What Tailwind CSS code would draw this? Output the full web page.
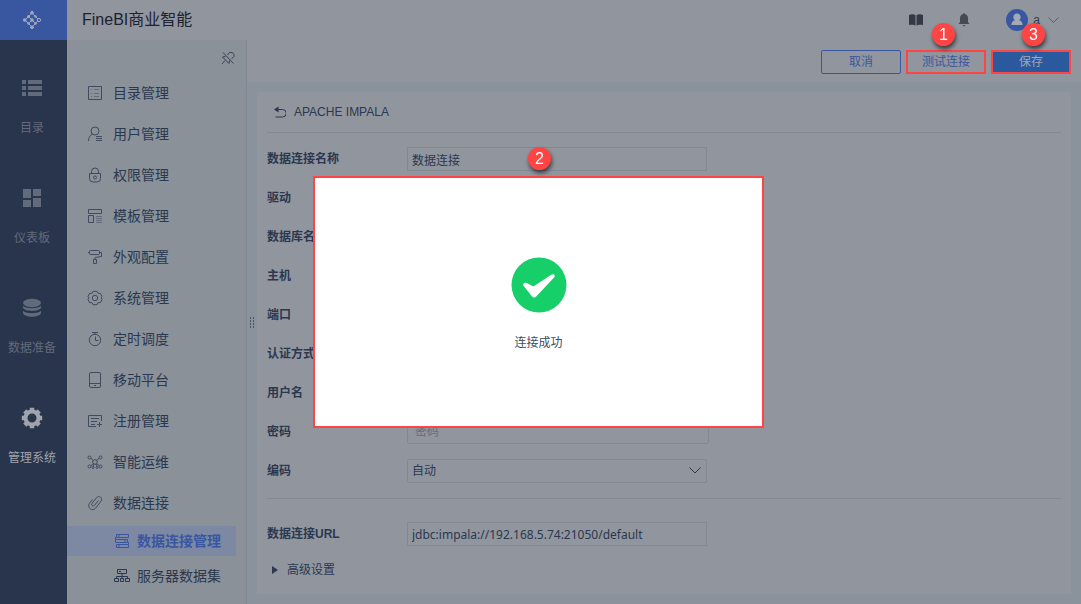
<!DOCTYPE html>
<html lang="zh-CN">
<head>
    <meta charset="UTF-8">
    <meta name="viewport" content="width=device-width, initial-scale=1.0">
    <title>FineBI商业智能</title>
    <script src="https://cdn.jsdelivr.net/npm/@tailwindcss/browser@4"></script>
</head>
<body class="flex min-h-screen flex-col bg-[#8a929c] font-['Liberation_Sans','Noto_Sans_CJK_SC',sans-serif] text-xs text-[#2b384f]">

    <!-- Top bar -->
    <header class="flex h-10 bg-[#91959e]">
        <a href="#" aria-label="FineBI" class="flex w-[67px] items-center justify-center bg-[#3957a1] pr-1 text-[#a3abbf]">
            <svg class="size-5" viewBox="0 0 20 20" fill="none" stroke="currentColor">
                <path d="M10 3 3 10l7 7 7-7zM7 13l3-3 3 3M6.500 6.500L10 10" />
                <g fill="currentColor" stroke="none">
                    <circle cx="10" cy="2.700" r="1.800" /><circle cx="2.700" cy="10" r="1.800" />
                    <circle cx="10" cy="17.300" r="1.800" /><circle cx="6.500" cy="6.500" r="1.500" />
                    <circle cx="10" cy="10" r="1.700" /><circle cx="6.500" cy="13.500" r="1.200" />
                    <circle cx="13.500" cy="13.500" r="1.300" /><circle cx="13.500" cy="6.500" r="1.200" />
                </g>
                <circle cx="17" cy="10" r="1.600" fill="#3957a1" />
            </svg>
        </a>
        <h1 class="flex-1 pl-[15px] text-base leading-10 text-[#1b2230]">FineBI商业智能</h1>
        <div class="flex items-center pr-[22px] text-[#343a45]">
            <svg class="mr-[35px] h-3 w-[14px]" viewBox="0 0 14 12" fill="currentColor"><path d="M0 1C2 0 5 0 6.500 1.200V11.500C5 10.500 2 10.500 0 11zM14 1C12 0 9 0 7.500 1.200V11.500C9 10.500 12 10.500 14 11z" /></svg>
            <svg class="mr-9 h-[14px] w-3" viewBox="0 0 12 14" fill="#454a55"><path d="M6 1c2.500 0 4 2 4 4v4l1.500 2H.5L2 9V5c0-2 1.500-4 4-4zM4.500 12h3L6 13.500z" /><circle cx="6" cy="1.300" r="1" /></svg>
            <svg class="mr-[5px] size-[22px]" viewBox="0 0 22 22"><circle cx="11" cy="11" r="11" fill="#3957a1" /><path d="M11 4.500a3.600 3.600 0 0 1 3.600 3.800c0 1.300-.7 2.300-1.600 3 2.200.6 3.600 2 3.600 4.700H5.400c0-2.700 1.400-4.100 3.600-4.700-.9-.7-1.600-1.700-1.600-3A3.600 3.600 0 0 1 11 4.500z" fill="#a3a9b5" /></svg>
            <span class="mr-2">a</span>
            <svg class="h-[6px] w-[11px]" viewBox="0 0 11 6" fill="none" stroke="#59606b"><path d="M.5.5l5 5 5-5" /></svg>
        </div>
    </header>

    <div class="flex flex-1">
        <!-- Primary navigation -->
        <nav class="w-[67px] shrink-0 bg-[#29344d] pr-[3px] text-[#626b7b]">
            <a href="#" class="flex h-[110px] flex-col items-center pt-9">
                <svg class="size-6" viewBox="0 0 24 24" fill="currentColor"><path d="M2 4h4v4H2zM8 4h14v4H8zM2 10h4v4H2zM8 10h14v4H8zM2 16h4v4H2zM8 16h14v4H8z" /></svg>
                <span class="mt-4 leading-6">目录</span>
            </a>
            <a href="#" class="flex h-[110px] flex-col items-center pt-9">
                <svg class="size-6" viewBox="0 0 24 24" fill="currentColor"><path d="M3 3h8v9H3zM3 14h8v7H3zM13 3h8v7h-8zM13 12h8v9h-8z" /></svg>
                <span class="mt-4 leading-6">仪表板</span>
            </a>
            <a href="#" class="flex h-[110px] flex-col items-center pt-9">
                <svg class="size-6" viewBox="0 0 24 24" fill="currentColor"><ellipse cx="12" cy="7" rx="9" ry="4.200" /><path d="M3 9.500c1.500 3.500 16.500 3.500 18 0v2c-1 4.500-17 4.500-18 0zM3 14.500c1.500 3.500 16.500 3.500 18 0v2.500c-1 5-17 5-18 0z" /></svg>
                <span class="mt-4 leading-6">数据准备</span>
            </a>
            <a href="#" aria-current="page" class="flex h-[110px] flex-col items-center pt-9 text-[#a0a4ac]">
                <svg class="size-6" viewBox="0 0 24 24" fill="none" stroke="currentColor"><circle cx="12" cy="12" r="6.500" stroke-width="4" /><path d="M12 1.800v3M12 19.200v3M1.800 12h3M19.200 12h3M4.800 4.800l2 2M17.200 17.200l2 2M4.800 19.200l2-2M17.200 6.800l2-2" stroke-width="4.500" /></svg>
                <span class="mt-4 leading-6">管理系统</span>
            </a>
        </nav>

        <!-- Management menu -->
        <aside class="w-[180px] shrink-0 border-r border-[#7f8792] bg-[#8a9199] text-sm">
            <div class="flex h-8 justify-end pt-[11px] pr-[11px]">
                <button type="button" aria-label="取消固定" class="size-[14px] text-[#3a4456]">
                    <svg class="size-[14px]" viewBox="0 0 14 14" fill="none" stroke="currentColor"><path d="M2 1.500l10.500 11M6.500 4l2-2.500h3l1.500 2v2L10.500 8M4.500 5.500l-3 .5 6.500 6.500.5-3M4 9.500L1 13" /></svg>
                </button>
            </div>
            <a href="#" class="flex h-[41px] items-center gap-[10px] pl-5">
                <svg class="size-4" viewBox="0 0 16 16" fill="none" stroke="#414b5f"><path d="M1.500 1.500h13v13h-13z" /><path d="M4 4.500h1M7 4.500h5M4 8.500h1M7 8.500h5M4 11.500h1M7 11.500h5" stroke="#636b7a" /></svg>
                目录管理
            </a>
            <a href="#" class="flex h-[41px] items-center gap-[10px] pl-5">
                <svg class="size-4" viewBox="0 0 16 16" fill="none" stroke="#414b5f"><circle cx="8" cy="5" r="4" /><path d="M5.500 8C3 9.500 1.500 11.500 1.500 15M9 10.500h6M9 12.500h6M9 14.500h6" /></svg>
                用户管理
            </a>
            <a href="#" class="flex h-[41px] items-center gap-[10px] pl-5">
                <svg class="size-4" viewBox="0 0 16 16" fill="none" stroke="#414b5f"><path d="M2.500 6.500h11v5q0 3.500-3.500 3.500H6q-3.500 0-3.500-3.500zM4.500 6V4.500a3.500 3.500 0 0 1 7 0V6" /><circle cx="8" cy="10.500" r="1.500" /></svg>
                权限管理
            </a>
            <a href="#" class="flex h-[41px] items-center gap-[10px] pl-5">
                <svg class="size-4" viewBox="0 0 16 16" fill="none" stroke="#414b5f"><path d="M1.500 1.500h13v4h-13zM1.500 7.500h5v7h-5z" /><path d="M9 8.500h6M9 10.500h6M9 12.500h6M9 14.500h6" stroke="#636b7a" /></svg>
                模板管理
            </a>
            <a href="#" class="flex h-[41px] items-center gap-[10px] pl-5">
                <svg class="size-4" viewBox="0 0 16 16" fill="none" stroke="#414b5f"><path d="M3.500 1.500h8q1 0 1 1v2q0 1-1 1h-8q-1 0-1-1v-2q0-1 1-1zM1 3.500h1.500M12.500 3.500h2v4l-6.500 1v1.500M6.500 10.500h3v4h-3z" /></svg>
                外观配置
            </a>
            <a href="#" class="flex h-[41px] items-center gap-[10px] pl-5">
                <svg class="size-4" viewBox="0 0 16 16" fill="none" stroke="#414b5f"><circle cx="8" cy="8" r="2.700" /><path d="M6 1.300h4l1 2 2.500.2 1.500 3L14 8l1 1.500-1.500 3-2.500.2-1 2H6l-1-2-2.500-.2-1.500-3L2 8 1 6.500l1.500-3L5 3.300z" stroke-linejoin="round" /></svg>
                系统管理
            </a>
            <a href="#" class="flex h-[41px] items-center gap-[10px] pl-5">
                <svg class="size-4" viewBox="0 0 16 16" fill="none" stroke="#414b5f"><circle cx="8" cy="9" r="5.700" /><path d="M5 1.500h6M8 1.500v2M8.500 5.500v4h3" /></svg>
                定时调度
            </a>
            <a href="#" class="flex h-[41px] items-center gap-[10px] pl-5">
                <svg class="size-4" viewBox="0 0 16 16" fill="none" stroke="#414b5f"><rect x="2.500" y=".5" width="11" height="15" rx="1.500" /><path d="M3 11.500h10M7 13.500h2" /></svg>
                移动平台
            </a>
            <a href="#" class="flex h-[41px] items-center gap-[10px] pl-5">
                <svg class="size-4" viewBox="0 0 16 16" fill="none" stroke="#414b5f"><path d="M14.500 8V2.500h-13v11H9M4 5.500h8M4 8.500h6M4 11.500h4M12.500 9v5M10 11.500h5" /></svg>
                注册管理
            </a>
            <a href="#" class="flex h-[41px] items-center gap-[10px] pl-5">
                <svg class="size-4" viewBox="0 0 16 16" fill="none" stroke="#414b5f"><circle cx="2.500" cy="3.500" r="1.500" /><circle cx="13.500" cy="3.500" r="1.500" /><circle cx="2.500" cy="12.500" r="1.500" /><circle cx="13.500" cy="12.500" r="1.500" /><circle cx="6" cy="13.500" r="1" /><circle cx="10" cy="13.500" r="1" /><circle cx="8" cy="8" r="2.300" /><path d="M4 4.500l2.500 2M12 4.500l-2.500 2M4 11.500l2.500-2M12 11.500l-2.500-2M7 10l-1 2.500M9 10l1 2.500" /></svg>
                智能运维
            </a>
            <a href="#" class="flex h-[41px] items-center gap-[10px] pl-5">
                <svg class="size-4" viewBox="0 0 16 16" fill="none" stroke="#414b5f"><path d="M11.500 5.500l-4 4.800c-1.500 1.700-3.800 0-2.500-1.900l4.500-5.700c2.500-2.700 6.500-.2 4.600 3.300l-5.300 7c-3.500 3.700-9 .2-6.500-4.500L5.500 4.500" /></svg>
                数据连接
            </a>
            <a href="#" aria-current="page" class="mt-[3px] mr-[10px] flex h-[30px] items-center gap-[7px] bg-[#7d89a3] pl-[47px] font-bold text-[#3957a1]">
                <svg class="size-4" viewBox="0 0 16 16" fill="none" stroke="currentColor"><path d="M2.500 1.500h12v3h-12zM1.500 6.500h12v3h-12zM2.500 11.500h12v3h-12zM4 3h2M10 8h2M4 13h2M1.500 4v2.500M14.500 9v2.500" /></svg>
                数据连接管理
            </a>
            <a href="#" class="mt-[5px] flex h-[30px] items-center gap-[7px] pl-[47px]">
                <svg class="size-4" viewBox="0 0 16 16" fill="none" stroke="currentColor"><path d="M3.500 1.500h9v4h-9zM5 3.500h2M8 5.500v5M2.500 10.500v-2h11v2M.5 10.500h4v3h-4zM6.500 10.500h3v3h-3zM11.500 10.500h4v3h-4z" /></svg>
                服务器数据集
            </a>
        </aside>

        <main class="flex min-w-0 flex-1 flex-col">
            <!-- Actions -->
            <div class="flex h-[42px] items-center justify-end gap-[5px] bg-[#91959e] pr-[10px] pt-[2px]">
                <button type="button" class="h-6 w-20 rounded-xs border border-[#3957a1] text-[#3957a1]">取消</button>
                <button type="button" class="relative h-6 w-20 border border-[#3957a1] text-[#3957a1] outline-2 -outline-offset-2 outline-[#ff4444]">
                    测试连接
                    <span class="absolute -top-7 left-[25px] z-20 size-[23px] rounded-full bg-[#ff4444] text-base leading-[23px] text-white shadow-[1px_3px_4px_#0009]">1</span>
                </button>
                <button type="button" class="relative h-6 w-20 border border-[#2b599e] bg-[#2b599e] text-[#a0a7b5] outline-2 -outline-offset-2 outline-[#ff4444]">
                    保存
                    <span class="absolute -top-7 left-[30px] z-20 size-[23px] rounded-full bg-[#ff4444] text-base leading-[23px] text-white shadow-[1px_3px_4px_#0009]">3</span>
                </button>
            </div>

            <div class="flex flex-1">
                <!-- Splitter handle -->
                <div class="flex w-[10px] items-center justify-center">
                    <svg class="mb-10 h-3 w-[5px]" viewBox="0 0 5 12" fill="#4a5363"><path d="M0 0h1v2H0zM3 0h1v2H3zM0 3h1v2H0zM3 3h1v2H3zM0 6h1v2H0zM3 6h1v2H3zM0 9h1v2H0zM3 9h1v2H3z" /></svg>
                </div>

                <form class="my-[10px] mr-[10px] min-w-0 flex-1 bg-[#91959e] px-[10px]">
                    <div class="flex h-[41px] items-center gap-2 border-b border-[#828995] pl-[7px]">
                        <button type="button" aria-label="返回" class="h-3 w-3">
                            <svg class="h-3 w-3" viewBox="0 0 12 12" fill="none" stroke="currentColor"><path d="M1 3.500h7.500a3.700 3.700 0 0 1 0 7.500H1.500" /><path d="M0 3.500L4.500.5v6z" fill="currentColor" stroke="none" /></svg>
                        </button>
                        <h2>APACHE IMPALA</h2>
                    </div>

                    <div class="grid grid-cols-[140px_1fr] items-center gap-y-[15px] pt-[14px] pb-[15px]">
                        <label for="name" class="font-bold">数据连接名称</label>
                        <div class="relative w-[300px]">
                            <input id="name" type="text" value="数据连接" class="block h-6 w-full border border-[#828995] px-1">
                            <span class="absolute top-0 left-[121px] z-20 size-[23px] rounded-full bg-[#ff4444] text-center text-base leading-[23px] text-white shadow-[1px_3px_4px_#0009]">2</span>
                        </div>
                        <label for="driver" class="font-bold">驱动</label>
                        <input id="driver" type="text" class="h-6 w-[300px] border border-[#828995] px-1">
                        <label for="database" class="font-bold">数据库名称</label>
                        <input id="database" type="text" class="h-6 w-[300px] border border-[#828995] px-1">
                        <label for="host" class="font-bold">主机</label>
                        <input id="host" type="text" class="h-6 w-[300px] border border-[#828995] px-1">
                        <label for="port" class="font-bold">端口</label>
                        <input id="port" type="text" class="h-6 w-[300px] border border-[#828995] px-1">
                        <label for="auth" class="font-bold">认证方式</label>
                        <input id="auth" type="text" class="h-6 w-[300px] border border-[#828995] px-1">
                        <label for="user" class="font-bold">用户名</label>
                        <input id="user" type="text" class="h-6 w-[300px] border border-[#828995] px-1">
                        <label for="password" class="font-bold">密码</label>
                        <input id="password" type="password" placeholder="密码" class="h-6 w-[302px] rounded-xs border border-[#828995] px-[7px] placeholder:text-[#666e7b]">
                        <label for="encoding" class="font-bold">编码</label>
                        <div class="relative w-[300px]">
                            <select id="encoding" class="block h-6 w-full appearance-none rounded-xs border border-[#828995] px-1">
                                <option>自动</option>
                            </select>
                            <svg class="pointer-events-none absolute top-2 right-[6px] h-[7px] w-3" viewBox="0 0 12 7" fill="none" stroke="currentColor"><path d="M.5.5l5.500 5.500L11.500.5" /></svg>
                        </div>
                    </div>

                    <div class="grid grid-cols-[140px_1fr] items-center border-t border-[#828995] pt-[23px]">
                        <label for="url" class="font-bold">数据连接URL</label>
                        <input id="url" type="text" value="jdbc:impala://192.168.5.74:21050/default" class="h-6 w-[300px] border border-[#828995] px-1 font-['Noto_Sans'] text-xs">
                    </div>
                    <button type="button" class="mt-[14px] mb-3 flex items-center gap-2 pl-[5px] leading-5">
                        <svg class="h-2 w-[7px]" viewBox="0 0 7 8" fill="currentColor"><path d="M0 0l6 4-6 4z" /></svg>
                        高级设置
                    </button>
                </form>
            </div>
        </main>
    </div>

    <!-- Connection result dialog -->
    <div class="fixed inset-0 z-10 flex items-center justify-center pr-1">
        <div role="dialog" aria-label="连接成功" class="flex h-[252px] w-[451px] flex-col items-center border-2 border-[#ff4444] bg-white pt-[79px]">
            <svg class="size-14" viewBox="0 0 55 55"><circle cx="27.500" cy="27.500" r="27" fill="#16cf69" /><path d="M12.500 28.500c-1.500-2 .5-4 3-3l6.500 3.500L39.500 17.500c2.500-1.500 4.500.5 3 2.500L25 38.500q-2.500 2.500-4.500 0z" fill="#fff" /></svg>
            <p class="mt-5 leading-5 text-[#3d4d66]">连接成功</p>
        </div>
    </div>

</body>
</html>
